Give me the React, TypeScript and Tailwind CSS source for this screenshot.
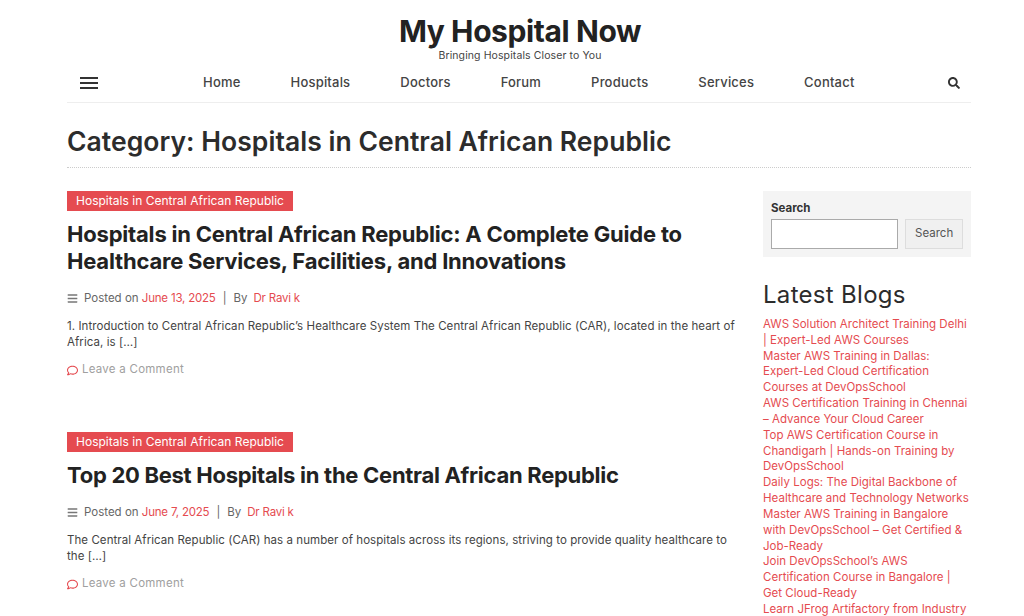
import React from 'react';
import { FaBars, FaRegComment, FaSearch } from 'react-icons/fa';

const NAV = ['Home', 'Hospitals', 'Doctors', 'Forum', 'Products', 'Services', 'Contact'];

const BLOGS = [
  ['AWS Solution Architect Training Delhi', '| Expert-Led AWS Courses'],
  ['Master AWS Training in Dallas:', 'Expert-Led Cloud Certification', 'Courses at DevOpsSchool'],
  ['AWS Certification Training in Chennai', '– Advance Your Cloud Career'],
  ['Top AWS Certification Course in', 'Chandigarh | Hands-on Training by', 'DevOpsSchool'],
  ['Daily Logs: The Digital Backbone of', 'Healthcare and Technology Networks'],
  ['Master AWS Training in Bangalore', 'with DevOpsSchool – Get Certified &', 'Job-Ready'],
  ['Join DevOpsSchool’s AWS', 'Certification Course in Bangalore |', 'Get Cloud-Ready'],
  ['Learn JFrog Artifactory from Industry'],
];

type PostProps = {
  title: string[];
  titleClass: string;
  date: string;
  excerpt: string[];
};

const Post: React.FC<PostProps> = ({ title, titleClass, date, excerpt }) => (
  <article className="mb-[54px]">
    <div className="h-[20px] w-fit bg-[#e54b50] px-[9px] text-[12px] leading-[20px] tracking-[0.02px] text-white">
      Hospitals in Central African Republic
    </div>
    <h2 className={`mt-[10px] text-[22px] font-bold leading-[27px] text-[#222] ${titleClass}`}>
      {title.map((line) => (
        <div key={line}>{line}</div>
      ))}
    </h2>
    <div className="mt-[15px] flex h-[16px] items-center text-[11.5px] leading-[16px] text-[#666]">
      <FaBars className="mr-[6px] text-[11px] text-[#777]" />
      <span>Posted on&nbsp;</span>
      <span className="tracking-[-0.2px] text-[#e54b50]">{date}</span>
      <span className="mx-[7px]">|</span>
      <span>By</span>
      <span className="ml-[6px] tracking-[-0.2px] text-[#e54b50]">Dr Ravi k</span>
    </div>
    <div className="mt-[12px] text-[11.5px] leading-[16px] tracking-[0.06px] text-[#444]">
      {excerpt.map((line) => (
        <div key={line}>{line}</div>
      ))}
    </div>
    <div className="mt-[12px] flex h-[16px] items-center text-[11.5px] tracking-[0.25px] text-[#a0a0a0]">
      <FaRegComment className="mr-[4px] text-[11px] text-[#e54b50]" />
      Leave a Comment
    </div>
  </article>
);

export default function App() {
  return (
    <div className="h-[616px] overflow-hidden bg-white font-['Inter','Noto_Sans',sans-serif]">
      <div className="ml-[67px] w-[904px]">
        <header className="border-b border-[#eeeeee] pb-[7px] pt-[13px]">
          <div className="pl-[2px] text-center">
            <div className="text-[30px] font-bold leading-[36px] tracking-[-0.4px] text-[#222]">My Hospital Now</div>
            <div className="text-[10.5px] leading-[14px] tracking-[0.1px] text-[#444]">Bringing Hospitals Closer to You</div>
          </div>
          <div className="mt-[8px] flex h-[24px] items-center">
            <div className="ml-[13px] flex w-[18px] flex-col gap-[3px]">
              <span className="h-[2px] bg-[#333]"></span>
              <span className="h-[2px] bg-[#333]"></span>
              <span className="h-[2px] bg-[#333]"></span>
            </div>
            <nav className="ml-[105px] flex gap-[50px] text-[13px] font-medium tracking-[0.2px] text-[#444]">
              {NAV.map((item) => (
                <span key={item}>{item}</span>
              ))}
            </nav>
            <FaSearch className="ml-auto mr-[11px] text-[12px] text-[#333]" />
          </div>
        </header>

        <h1 className="mt-[21px] text-[26.5px] font-semibold leading-[34px] tracking-[0.04px] text-[#2c2c2c]">
          Category: Hospitals in Central African Republic
        </h1>
        <div className="mt-[9px] border-b border-dotted border-[#cccccc]"></div>

        <div className="mt-[23px] flex">
          <main className="w-[670px]">
            <Post
              title={['Hospitals in Central African Republic: A Complete Guide to', 'Healthcare Services, Facilities, and Innovations']}
              titleClass="tracking-[-0.2px]"
              date="June 13, 2025"
              excerpt={[
                '1. Introduction to Central African Republic’s Healthcare System The Central African Republic (CAR), located in the heart of',
                'Africa, is […]',
              ]}
            />
            <Post
              title={['Top 20 Best Hospitals in the Central African Republic']}
              titleClass="tracking-[-0.28px]"
              date="June 7, 2025"
              excerpt={[
                'The Central African Republic (CAR) has a number of hospitals across its regions, striving to provide quality healthcare to',
                'the […]',
              ]}
            />
          </main>

          <aside className="ml-[26px] w-[208px]">
            <div className="h-[66px] bg-[#f4f4f4] px-[8px] pt-[10px]">
              <div className="text-[11.5px] font-bold leading-[14px] text-[#333]">Search</div>
              <div className="mt-[4px] flex gap-[7px]">
                <div className="h-[30px] w-[128px] border border-[#aaaaaa] bg-white"></div>
                <div className="flex h-[30px] w-[58px] items-center justify-center border border-[#dddddd] bg-[#f0f0f0] text-[11.5px] text-[#555]">
                  Search
                </div>
              </div>
            </div>
            <h3 className="mt-[21px] text-[24px] font-normal leading-[34px] tracking-[0.3px] text-[#2c2c2c]">Latest Blogs</h3>
            <ul className="mt-[5px] text-[11.5px] leading-[15.83px] tracking-[0.02px] text-[#e54b50]">
              {BLOGS.map((lines) => (
                <li key={lines[0]}>
                  {lines.map((line) => (
                    <div key={line} className="whitespace-nowrap">{line}</div>
                  ))}
                </li>
              ))}
            </ul>
          </aside>
        </div>
      </div>
    </div>
  );
}
